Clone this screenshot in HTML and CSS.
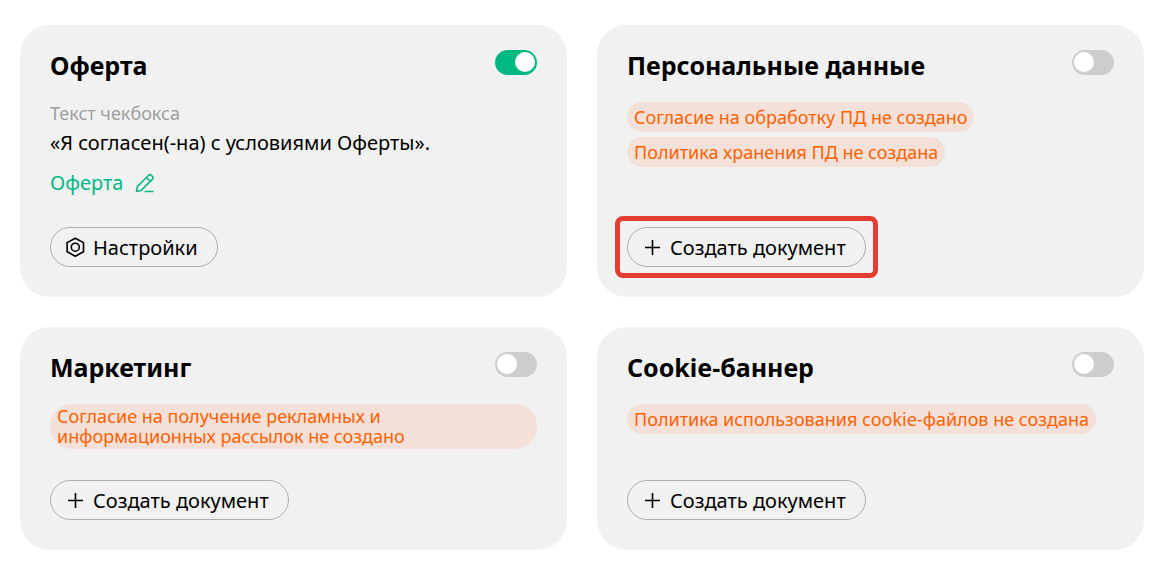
FILE: index.html
```html
<!DOCTYPE html>
<html lang="ru">
<head>
<meta charset="utf-8">
<meta name="viewport" content="width=device-width, initial-scale=1">
<title>Документы</title>
<link rel="stylesheet" href="styles.css">
</head>
<body>
<main class="cards">
  <section class="card">
    <header class="card-header">
      <h2 class="card-title" id="t-offer">Оферта</h2>
      <input class="toggle" type="checkbox" role="switch" aria-labelledby="t-offer" checked>
    </header>
    <p class="hint">Текст чекбокса</p>
    <p class="statement">«Я согласен(-на) с условиями Оферты».</p>
    <a class="doc-link" href="#offer">Оферта
      <svg class="icon" viewBox="0 0 20 20" aria-hidden="true"><path d="M1.5 18.3l.8-4.6L13.6 2.2a1.8 1.8 0 0 1 2.6 0l1.3 1.3a1.8 1.8 0 0 1 0 2.6L6.1 17.5zM11.4 4.5l3.8 3.8M9.5 18.5h9"/></svg>
    </a>
    <div class="card-footer">
      <button class="button" type="button">
        <svg class="icon" viewBox="0 0 20 20" aria-hidden="true"><path d="M10.3 1.2l8.2 4.4v9.2l-8.2 4.4-8.2-4.4V5.6z"/><circle cx="10.3" cy="10.2" r="4"/></svg>
        Настройки
      </button>
    </div>
  </section>

  <section class="card">
    <header class="card-header">
      <h2 class="card-title" id="t-personal">Персональные данные</h2>
      <input class="toggle" type="checkbox" role="switch" aria-labelledby="t-personal">
    </header>
    <ul class="tags">
      <li class="tag">Согласие на обработку ПД не создано</li>
      <li class="tag">Политика хранения ПД не создана</li>
    </ul>
    <div class="card-footer">
      <button class="button button-marked" type="button">
        <svg class="icon" viewBox="0 0 20 20" aria-hidden="true"><path d="M10.5 3v15M3 10.5h15"/></svg>
        Создать документ
      </button>
    </div>
  </section>

  <section class="card">
    <header class="card-header">
      <h2 class="card-title" id="t-marketing">Маркетинг</h2>
      <input class="toggle" type="checkbox" role="switch" aria-labelledby="t-marketing">
    </header>
    <ul class="tags">
      <li class="tag tag-long">Согласие на получение рекламных и информационных рассылок не создано</li>
    </ul>
    <div class="card-footer">
      <button class="button" type="button">
        <svg class="icon" viewBox="0 0 20 20" aria-hidden="true"><path d="M10.5 3v15M3 10.5h15"/></svg>
        Создать документ
      </button>
    </div>
  </section>

  <section class="card">
    <header class="card-header">
      <h2 class="card-title" id="t-cookie">Cookie-баннер</h2>
      <input class="toggle" type="checkbox" role="switch" aria-labelledby="t-cookie">
    </header>
    <ul class="tags">
      <li class="tag">Политика использования cookie-файлов не создана</li>
    </ul>
    <div class="card-footer">
      <button class="button" type="button">
        <svg class="icon" viewBox="0 0 20 20" aria-hidden="true"><path d="M10.5 3v15M3 10.5h15"/></svg>
        Создать документ
      </button>
    </div>
  </section>
</main>
</body>
</html>
```
FILE: styles.css
```css
* {
  box-sizing: border-box;
}

body {
  margin: 0;
  background: #fff;
  color: #000;
  font-family: "Noto Sans", sans-serif;
  font-size: 20px;
}

.cards {
  display: grid;
  grid-template-columns: repeat(2, minmax(0, 1fr));
  gap: 30px;
  padding: 25px 29px 14px 20px;
}

.card {
  display: flex;
  flex-direction: column;
  align-items: flex-start;
  padding: 25px 30px 30px;
  border-radius: 30px;
  background: #f1f1f1;
}

.card-header {
  display: flex;
  align-items: flex-start;
  justify-content: space-between;
  align-self: stretch;
  margin-bottom: 22px;
}

.card-title {
  margin: 0;
  font-size: 25px;
  font-weight: 700;
  line-height: 30px;
}

.toggle {
  appearance: none;
  display: flex;
  flex: none;
  width: 42px;
  height: 25px;
  margin: 0;
  padding: 2px;
  border-radius: 13px;
  background: #cdcdcd;
  cursor: pointer;
}

.toggle::before {
  content: "";
  width: 20px;
  height: 20px;
  border-radius: 50%;
  background: #fff;
}

.toggle:checked {
  justify-content: flex-end;
  background: #00b982;
}

.hint {
  margin: 0 0 6px;
  color: #9e9e9e;
  font-size: 18px;
  line-height: 22px;
}

.statement {
  margin: 0 0 14px;
  line-height: 26px;
}

.doc-link {
  display: flex;
  align-items: center;
  gap: 12px;
  color: #00b982;
  line-height: 26px;
  text-decoration: none;
}

.icon {
  flex: none;
  width: 20px;
  height: 20px;
  fill: none;
  stroke: currentColor;
  stroke-width: 1.6;
  stroke-linejoin: round;
}

.tags {
  display: flex;
  flex-direction: column;
  align-items: flex-start;
  gap: 5px;
  margin: 0;
  padding: 0;
  list-style: none;
}

.tag {
  padding: 5px 7px;
  border-radius: 22px;
  background: #f3e1d9;
  color: #ff6000;
  font-size: 18px;
  line-height: 20px;
}

.tag-long {
  padding: 2px 7px 3px;
}

.card-footer {
  margin-top: auto;
  padding-top: 31px;
}

.button {
  position: relative;
  display: flex;
  align-items: center;
  gap: 8px;
  height: 40px;
  padding: 0 19px 0 14px;
  border: 1px solid #adadad;
  border-radius: 20px;
  background: transparent;
  color: #000;
  font: inherit;
  cursor: pointer;
}

.button-marked::after {
  content: "";
  position: absolute;
  inset: -12px -13px;
  border: 5px solid #e53c32;
  border-radius: 8px;
}
```
